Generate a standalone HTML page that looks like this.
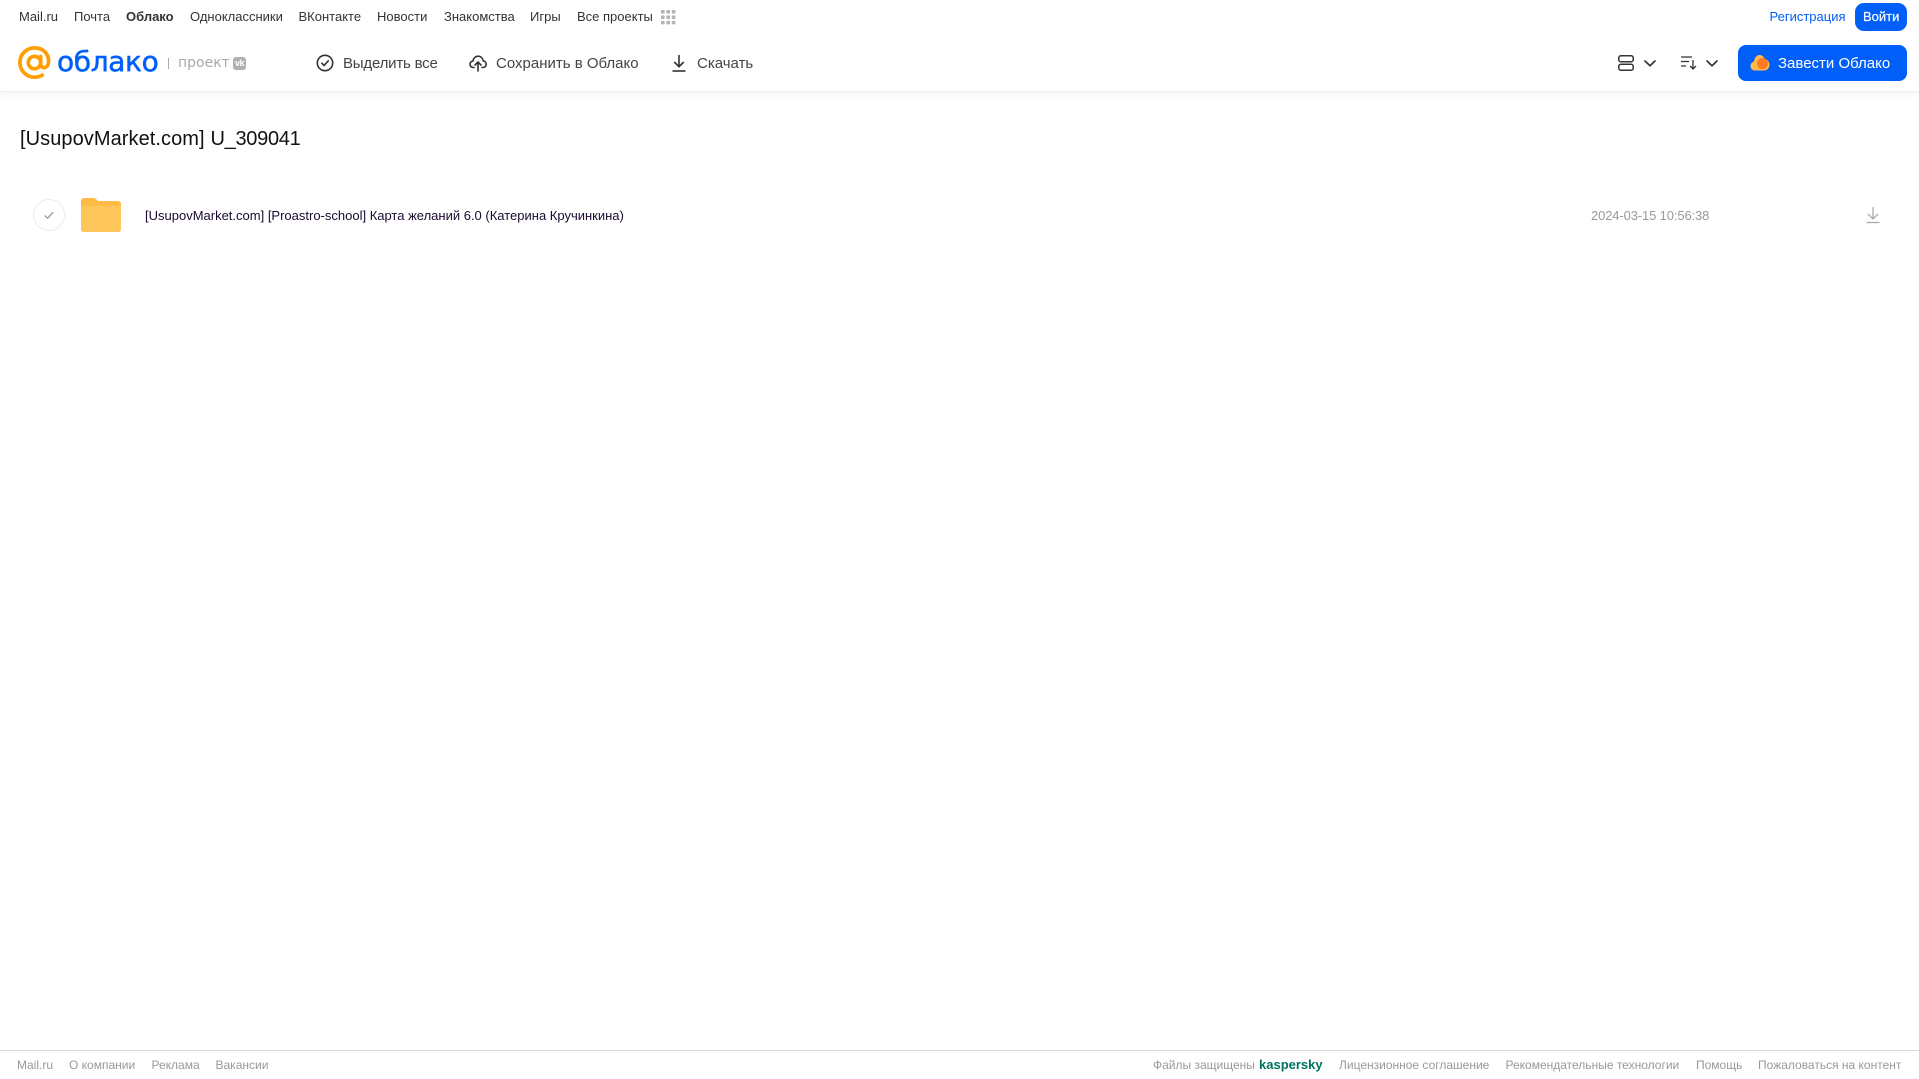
<!DOCTYPE html>
<html lang="ru">
<head>
<meta charset="utf-8">
<title>[UsupovMarket.com] U_309041</title>
<style>
html,body{margin:0;padding:0;background:#fff;width:1919px;height:1079px;overflow:hidden}
body{position:relative;font-family:"Liberation Sans",Arial,sans-serif;color:#333}
a,span.t{position:absolute;white-space:nowrap;text-decoration:none;display:block}
svg{position:absolute;display:block;overflow:visible}
.top{font-size:13px;line-height:16px;top:9px;color:#333}
.tool{font-size:15px;line-height:18px;top:55px;color:#444}
.foot{font-size:12px;line-height:14px;top:1058px;color:#999}
#hdr{position:absolute;left:0;top:0;width:1919px;height:91px;background:#fff;box-shadow:0 1px 0 #f0f0f0,0 3px 8px rgba(0,0,0,.05)}
#ftr{position:absolute;left:0;top:1050px;width:1919px;height:1px;background:#d9d9d9}
</style>
</head>
<body>
<header id="hdr"></header>

<a class="top" style="left:19px">Mail.ru</a>
<a class="top" style="left:74px">Почта</a>
<a class="top" style="left:126px;font-weight:700">Облако</a>
<a class="top" style="left:190px">Одноклассники</a>
<a class="top" style="left:298.500px">ВКонтакте</a>
<a class="top" style="left:377px">Новости</a>
<a class="top" style="left:444px">Знакомства</a>
<a class="top" style="left:530px">Игры</a>
<a class="top" style="left:577px">Все проекты</a>
<svg style="left:661px;top:10px" width="15" height="15" fill="#b4b4b4">
<rect x="0" y="0" width="3.6" height="3.6" rx=".8"/><rect x="5.4" y="0" width="3.6" height="3.6" rx=".8"/><rect x="10.800" y="0" width="3.6" height="3.6" rx=".8"/>
<rect x="0" y="5.400" width="3.6" height="3.6" rx=".8"/><rect x="5.4" y="5.400" width="3.6" height="3.6" rx=".8"/><rect x="10.800" y="5.400" width="3.6" height="3.6" rx=".8"/>
<rect x="0" y="10.800" width="3.6" height="3.6" rx=".8"/><rect x="5.4" y="10.800" width="3.6" height="3.6" rx=".8"/><rect x="10.800" y="10.800" width="3.6" height="3.6" rx=".8"/>
</svg>

<a class="top" style="left:1769.500px;color:#005ff9">Регистрация</a>
<div style="position:absolute;left:1855px;top:3px;width:52px;height:28px;border-radius:9px;background:#005ff9"></div>
<a class="top" style="left:1863px;color:#fff;-webkit-text-stroke:.2px #fff">Войти</a>

<!-- logo -->
<svg style="left:18px;top:46px" width="34" height="34" viewBox="0 0 34 34" fill="none" stroke="#ff9e00">
<circle cx="16.5" cy="16.500" r="6.200" stroke-width="3.700"/>
<path d="M22.7 10.500v7.500c0 5 6.800 5 7.800-1.200C31.500 8 25 1.900 16.500 1.900 8.500 1.900 1.900 8.300 1.900 16.500s6.600 14.700 14.600 14.700c3 0 5.500-.7 7.700-2" stroke-width="3.700" stroke-linecap="round"/>
</svg>
<span class="t" style="left:57px;top:44px;font-family:'DejaVu Sans',sans-serif;font-size:28px;line-height:36px;color:#005ff9;-webkit-text-stroke:.5px #005ff9;letter-spacing:-.35px">облако</span>
<div style="position:absolute;left:168px;top:58px;width:1px;height:11px;background:#aaa"></div>
<span class="t" style="left:178px;top:54px;font-family:'DejaVu Sans',sans-serif;font-size:14px;line-height:18px;color:#a8a8a8">проект</span>
<div style="position:absolute;left:233px;top:57px;width:13px;height:13px;border-radius:3px;background:#b0b0b0;color:#fff;font-size:9px;line-height:12px;text-align:center;font-weight:700;letter-spacing:-.5px">vk</div>

<!-- toolbar -->
<svg style="left:316px;top:54px" width="18" height="18" viewBox="0 0 18 18" fill="none" stroke="#333" stroke-width="1.600" stroke-linecap="round" stroke-linejoin="round">
<circle cx="9" cy="9" r="7.700"/><path d="M5.800 9.200l2.300 2.300 4.200-4.700"/>
</svg>
<a class="tool" style="left:343px;letter-spacing:-.2px">Выделить все</a>
<svg style="left:469px;top:54px" width="18" height="18" viewBox="0 0 18 18" fill="none" stroke="#333" stroke-width="1.600" stroke-linecap="round" stroke-linejoin="round">
<path d="M5 13.500H4.200C2.300 13.500 1 12 1 10.300c0-1.600 1.200-3 2.900-3.200C4.400 4.300 6.500 2.200 9.200 2.200c2.600 0 4.700 2 5 4.700 1.700.2 3 1.600 3 3.400 0 1.700-1.400 3.200-3.200 3.200H13"/>
<path d="M9 17V8.500M6 11l3-3 3 3"/>
</svg>
<a class="tool" style="left:496px">Сохранить в Облако</a>
<svg style="left:671px;top:54px" width="16" height="18" viewBox="0 0 16 18" fill="none" stroke="#333" stroke-width="1.600">
<path d="M8 1v11.500M3.300 8l4.700 4.700L12.700 8"/><path d="M1.500 17h13"/>
</svg>
<a class="tool" style="left:697px">Скачать</a>

<svg style="left:1618px;top:55px" width="16" height="16" viewBox="0 0 16 16" fill="none" stroke="#333" stroke-width="1.500">
<rect x=".8" y=".8" width="14.400" height="5.900" rx="2"/><rect x=".8" y="9.300" width="14.400" height="5.900" rx="2"/>
</svg>
<svg style="left:1644px;top:60px" width="12" height="7" viewBox="0 0 12 7" fill="none" stroke="#333" stroke-width="1.700" stroke-linecap="round" stroke-linejoin="round"><path d="M1 1l5 4.800L11 1"/></svg>
<svg style="left:1681px;top:56px" width="16" height="14" viewBox="0 0 16 14" fill="none" stroke="#333" stroke-width="1.300">
<path d="M0 1h11M0 5.500h8M0 10h5"/><path d="M12 4v9M9 10l3 3 3-3"/>
</svg>
<svg style="left:1706px;top:60px" width="12" height="7" viewBox="0 0 12 7" fill="none" stroke="#333" stroke-width="1.700" stroke-linecap="round" stroke-linejoin="round"><path d="M1 1l5 4.800L11 1"/></svg>

<div style="position:absolute;left:1738px;top:45px;width:169px;height:36px;border-radius:8px;background:#005ff9"></div>
<svg style="left:1750px;top:54px" width="20" height="17" viewBox="0 0 20 17">
<path d="M5 16.500C2.300 16.500.5 14.500.5 12c0-2.300 1.500-4 3.500-4.400C4.500 4 6.500 1 9.500 1c2.500 0 4.500 1.500 5 4 3 .3 5 2.800 5 5.700 0 3.200-2.500 5.800-5.500 5.800z" fill="#ffb84a"/>
<circle cx="12.500" cy="9.500" r="5.500" fill="#ff7a1f"/>
</svg>
<a class="tool" style="left:1778px;color:#fff">Завести Облако</a>

<h1 style="position:absolute;margin:0;left:20px;top:126px;font-size:20px;line-height:26px;font-weight:400;color:#111;white-space:nowrap"><span style="letter-spacing:.07px">[UsupovMarket.com]</span> <span style="letter-spacing:-.3px;margin-left:.3px">U_309041</span></h1>

<svg style="left:33px;top:199px" width="32" height="32" viewBox="0 0 32 32" fill="none">
<circle cx="16" cy="16" r="15.500" stroke="#ececec"/>
<path d="M11.800 16.500l2.800 2.700 5.600-6" stroke="#999" stroke-width="1.300"/>
</svg>
<svg style="left:81px;top:198px" width="40" height="34" viewBox="0 0 40 34">
<path d="M0 3a3 3 0 0 1 3-3h9c2 0 3 .8 4 2l1 1h20a3 3 0 0 1 3 3v25a3 3 0 0 1-3 3H3a3 3 0 0 1-3-3z" fill="#ffbb45"/>
<path d="M0 8h40v23a3 3 0 0 1-3 3H3a3 3 0 0 1-3-3z" fill="#ffc65c"/>
</svg>
<a style="left:145px;top:208px;font-size:13px;line-height:16px;color:#1a0a30">[UsupovMarket.com] [Proastro-school] Карта желаний 6.0 (Катерина Кручинкина)</a>
<span class="t" style="left:1591px;top:208px;font-size:13px;line-height:16px;color:#999;letter-spacing:-.13px">2024-03-15 10:56:38</span>
<svg style="left:1866px;top:206px" width="14" height="18" viewBox="0 0 14 18" fill="none" stroke="#aaa" stroke-width="1.300">
<path d="M7 1v12M2 8l5 5 5-5"/><path d="M.5 16.500h13"/>
</svg>

<footer id="ftr"></footer>
<a class="foot" style="left:17px">Mail.ru</a>
<a class="foot" style="left:69px">О компании</a>
<a class="foot" style="left:151.500px">Реклама</a>
<a class="foot" style="left:215.500px">Вакансии</a>
<span class="t foot" style="left:1153px">Файлы защищены</span>
<span class="t foot" style="left:1259px;font-size:13px;font-weight:700;color:#00735f">kaspersky</span>
<a class="foot" style="left:1339px">Лицензионное соглашение</a>
<a class="foot" style="left:1505.500px">Рекомендательные технологии</a>
<a class="foot" style="left:1696px">Помощь</a>
<a class="foot" style="left:1758px">Пожаловаться на контент</a>
</body>
</html>
